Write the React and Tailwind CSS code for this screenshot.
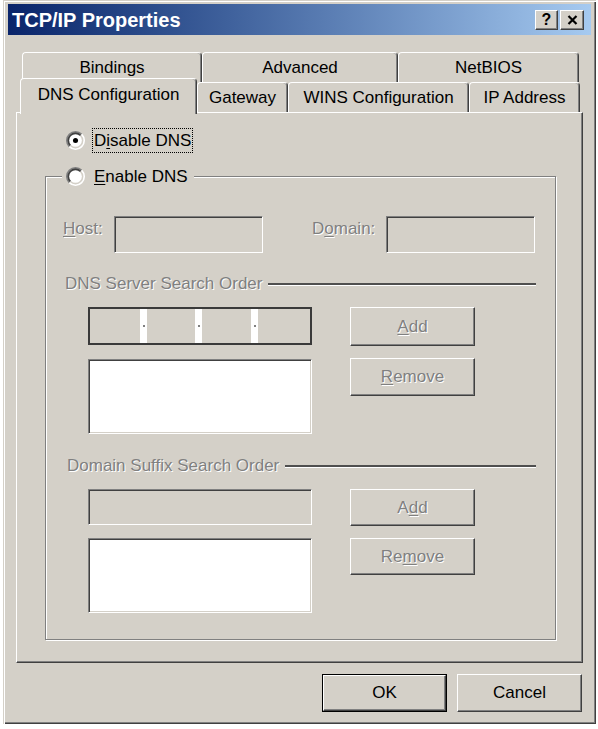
import React from "react";

const DIS = "text-[#808080] [text-shadow:1px_1px_0_#ffffff]";
const RAISED =
  "flex items-center justify-center bg-[#d4d0c8] border border-t-white border-l-white border-r-[#404040] border-b-[#404040] shadow-[inset_-1px_-1px_0_#808080]";
const SUNKEN =
  "border border-t-[#808080] border-l-[#808080] border-r-white border-b-white shadow-[inset_1px_1px_0_#404040,inset_-1px_-1px_0_#d4d0c8]";

function Radio({ checked }) {
  return (
    <svg width="19" height="19" viewBox="0 0 12 12" className="shrink-0">
      <path d="M1.757 10.243 A6 6 0 0 1 10.243 1.757 Z" fill="#808080" />
      <path d="M10.243 1.757 A6 6 0 0 1 1.757 10.243 Z" fill="#ffffff" />
      <path d="M2.464 9.536 A5 5 0 0 1 9.536 2.464 Z" fill="#404040" />
      <path d="M9.536 2.464 A5 5 0 0 1 2.464 9.536 Z" fill="#d4d0c8" />
      <circle cx="6" cy="6" r="4" fill="#ffffff" />
      {checked && <circle cx="6" cy="6" r="1.6" fill="#000000" />}
    </svg>
  );
}

function Tab({ label, className, selected }) {
  return (
    <div
      className={`${className} ${
        selected ? "relative z-10 h-[36px] -mb-[2px] pb-[3px]" : "h-[30px]"
      } flex items-center justify-center bg-[#d4d0c8] border-t border-l border-r border-t-white border-l-white border-r-[#404040] rounded-t-[4px] shadow-[inset_-1px_0_0_#808080] text-black`}
    >
      {label}
    </div>
  );
}

function Heading({ children, className }) {
  return (
    <div className={`flex items-center h-[20px] pr-[19px] ${className}`}>
      <span className={DIS}>{children}</span>
      <div className="ml-[6px] flex-1 h-[2px] bg-[#4f4f4f] shadow-[0_1px_0_#ffffff]" />
    </div>
  );
}

function Dot() {
  return (
    <div className="w-[7px] h-full bg-white flex items-center justify-center">
      <div className="w-[2px] h-[2px] bg-[#808080]" />
    </div>
  );
}

export default function App() {
  return (
    <div className="w-[598px] h-[729px] bg-white font-['Liberation_Sans',Arial,sans-serif] text-[17px] leading-[20px] select-none">
      <div className="ml-[3px] w-[593px] h-[724px] bg-[#d4d0c8] px-[5px] pt-[4px] shadow-[inset_1px_1px_0_#d4d0c8,inset_2px_2px_0_#ffffff,inset_-1px_-1px_0_#404040,inset_-2px_-2px_0_#808080] flex flex-col">
        {/* Title bar */}
        <div className="h-[31px] flex items-center bg-gradient-to-r from-[#0a246a] to-[#a6caf0]">
          <div className="pl-[4px] text-white font-bold text-[20px] leading-[24px] flex-1">
            TCP/IP Properties
          </div>
          <div className="flex gap-[2px] mr-[7px]">
            <div className={`${RAISED} w-[23px] h-[20px] font-bold text-[16px] leading-[16px] text-black`}>
              ?
            </div>
            <div className={`${RAISED} w-[24px] h-[20px]`}>
              <svg width="11" height="10" viewBox="0 0 11 10">
                <path d="M1.5 1 L9.5 9 M9.5 1 L1.5 9" stroke="#000" strokeWidth="2.2" />
              </svg>
            </div>
          </div>
        </div>

        {/* Tabs back row */}
        <div className="mt-[17px] ml-[14px] flex">
          <Tab label="Bindings" className="w-[180px]" />
          <Tab label="Advanced" className="w-[196px]" />
          <Tab label="NetBIOS" className="w-[181px]" />
        </div>
        {/* Tabs front row */}
        <div className="ml-[12px] flex items-end h-[30px]">
          <Tab label="DNS Configuration" className="w-[177px]" selected />
          <Tab label="Gateway" className="w-[91px]" />
          <Tab label="WINS Configuration" className="w-[181px]" />
          <Tab label="IP Address" className="w-[111px]" />
        </div>

        {/* Panel */}
        <div className="ml-[8px] w-[567px] h-[551px] border border-t-white border-l-white border-r-[#404040] border-b-[#404040] shadow-[inset_-1px_-1px_0_#808080] flex flex-col">
          <div className="mt-[15px] ml-[49px] h-[25px] flex items-center">
            <Radio checked />
            <div className="ml-[7px] border border-dotted border-black px-[1px] h-[25px] flex items-center text-black">
              D<span className="underline underline-offset-2">i</span>sable DNS
            </div>
          </div>

          {/* Group box */}
          <div className="mt-[23px] ml-[28px] w-[511px] h-[464px] border border-[#808080] shadow-[inset_1px_1px_0_#ffffff,1px_1px_0_#ffffff] flex flex-col">
            <div className="-mt-[12px] ml-[16px] w-fit h-[23px] pl-[4px] pr-[6px] bg-[#d4d0c8] flex items-center">
              <Radio />
              <span className="ml-[9px] text-black">
                <span className="underline underline-offset-2">E</span>nable DNS
              </span>
            </div>

            {/* Host / Domain */}
            <div className="mt-[28px] pl-[17px] flex items-start h-[37px]">
              <div className={`${DIS} w-[51px] mt-[3px]`}>
                <span className="underline underline-offset-2">H</span>ost:
              </div>
              <div className={`${SUNKEN} bg-[#d4d0c8] w-[149px] h-[37px]`} />
              <div className={`${DIS} ml-[49px] w-[74px] mt-[3px]`}>
                D<span className="underline underline-offset-2">o</span>main:
              </div>
              <div className={`${SUNKEN} bg-[#d4d0c8] w-[149px] h-[37px]`} />
            </div>

            <Heading className="mt-[21px] pl-[19px]">DNS Server Search Order</Heading>

            <div className="mt-[13px] pl-[42px] flex items-start">
              <div className="w-[224px] h-[38px] border-2 border-[#3a3a3a] flex">
                <div className="w-[50px] h-full" />
                <Dot />
                <div className="w-[48px] h-full" />
                <Dot />
                <div className="w-[49px] h-full" />
                <Dot />
                <div className="flex-1 h-full" />
              </div>
              <div className={`${RAISED} ml-[38px] w-[125px] h-[39px]`}>
                <span className={DIS}>
                  <span className="underline underline-offset-2">A</span>dd
                </span>
              </div>
            </div>

            <div className="mt-[12px] pl-[42px] flex items-start">
              <div className={`${SUNKEN} bg-white mt-[1px] w-[224px] h-[75px]`} />
              <div className={`${RAISED} ml-[38px] w-[125px] h-[38px]`}>
                <span className={DIS}>
                  <span className="underline underline-offset-2">R</span>emove
                </span>
              </div>
            </div>

            <Heading className="mt-[22px] pl-[21px]">Domain Suffix Search Order</Heading>

            <div className="mt-[13px] pl-[42px] flex items-start">
              <div className={`${SUNKEN} bg-[#d4d0c8] w-[224px] h-[36px]`} />
              <div className={`${RAISED} ml-[38px] w-[125px] h-[37px]`}>
                <span className={DIS}>
                  A<span className="underline underline-offset-2">d</span>d
                </span>
              </div>
            </div>

            <div className="mt-[12px] pl-[42px] flex items-start">
              <div className={`${SUNKEN} bg-white w-[224px] h-[75px]`} />
              <div className={`${RAISED} ml-[38px] w-[125px] h-[37px]`}>
                <span className={DIS}>
                  Re<span className="underline underline-offset-2">m</span>ove
                </span>
              </div>
            </div>
          </div>
        </div>

        {/* Bottom buttons */}
        <div className="mt-[11px] flex justify-end gap-[10px] pr-[9px]">
          <div className="w-[125px] h-[38px] border border-black flex">
            <div className={`${RAISED} flex-1 text-black`}>OK</div>
          </div>
          <div className={`${RAISED} w-[125px] h-[38px] text-black`}>Cancel</div>
        </div>
      </div>
    </div>
  );
}
